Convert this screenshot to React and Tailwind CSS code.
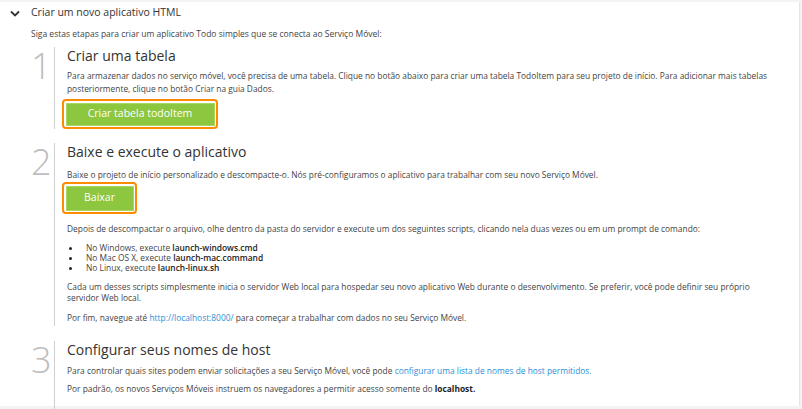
import React from "react";

function Step({ n, children, lineClass }) {
  return (
    <div className="flex">
      <div className="w-[23px] shrink-0 pr-[5px] pt-[2px] text-right text-[36px] leading-[34px] font-light text-[#bdbdbd]">{n}</div>
      <div className={`border-l border-[#cfcfcf] pl-[12px] pr-[20px] flex-1 ${lineClass || ""}`}>{children}</div>
    </div>
  );
}

function GreenButton({ label, w, h }) {
  return (
    <div className={`inline-block -ml-[5px] rounded-[4px] border-2 border-[#ff8c00] p-[1.5px] ${w}`}>
      <div className={`${h} bg-[#8dc63f] border border-[#a8d763] flex items-center justify-center text-white text-[10.5px]`}>{label}</div>
    </div>
  );
}

const P = "text-[8.4px] leading-[13px]";
const TITLE = "text-[14px] leading-[18px] text-[#333]";

export default function App() {
  return (
    <div className="w-[802px] h-[409px] overflow-hidden bg-[#f3f3f3] pt-[2px] pr-[2px] pb-[3px] text-[#444]" style={{ fontFamily: '"Open Sans", "Noto Sans", sans-serif' }}>
      <div className="h-full bg-white border-r border-[#e6e6e6]">
        {/* Header */}
        <div className="flex items-center h-[22px] pl-[10px]">
          <svg width="10" height="7" viewBox="0 0 10 7" className="mr-[11px]">
            <path d="M1 1.5 L5 5.5 L9 1.5" fill="none" stroke="#333" strokeWidth="1.8" />
          </svg>
          <span className="text-[10.5px] text-[#333]">Criar um novo aplicativo HTML</span>
        </div>
        <div className="pl-[31px] pt-[3px] text-[8.5px] leading-[13px]">
          Siga estas etapas para criar um aplicativo Todo simples que se conecta ao Serviço Móvel:
        </div>

        <div className="pl-[31px] mt-[7px]">
          {/* Step 1 */}
          <Step n="1">
            <div className={TITLE}>Criar uma tabela</div>
            <div className={`${P} mt-[4px]`}>
              Para armazenar dados no serviço móvel, você precisa de uma tabela. Clique no botão abaixo para criar uma tabela TodoItem para seu projeto de início. Para adicionar mais tabelas posteriormente, clique no botão Criar na guia Dados.
            </div>
            <div className="mt-[4px]">
              <GreenButton label="Criar tabela todoItem" w="w-[156px]" h="h-[23px]" />
            </div>
          </Step>

          {/* Step 2 */}
          <div className="mt-[14px]">
            <Step n="2" lineClass="pb-[2px]">
              <div className={TITLE}>Baixe e execute o aplicativo</div>
              <div className={`${P} mt-[7px]`}>
                Baixe o projeto de início personalizado e descompacte-o. Nós pré-configuramos o aplicativo para trabalhar com seu novo Serviço Móvel.
              </div>
              <div className="mt-[1px]">
                <GreenButton label="Baixar" w="w-[75px]" h="h-[25px]" />
              </div>
              <div className={`${P} mt-[8px]`}>
                Depois de descompactar o arquivo, olhe dentro da pasta do servidor e execute um dos seguintes scripts, clicando nela duas vezes ou em um prompt de comando:
              </div>
              <ul className="mt-[8px] text-[8.4px] leading-[10px]">
                {[
                  ["No Windows, execute ", "launch-windows.cmd"],
                  ["No Mac OS X, execute ", "launch-mac.command"],
                  ["No Linux, execute ", "launch-linux.sh"],
                ].map(([a, b]) => (
                  <li key={b} className="flex items-center">
                    <span className="w-[3px] h-[3px] rounded-full bg-[#222] ml-[2px] mr-[14px]" />
                    <span>{a}<b className="font-semibold text-[#222]">{b}</b></span>
                  </li>
                ))}
              </ul>
              <div className="text-[8.4px] leading-[10.5px] mt-[9px]">
                Cada um desses scripts simplesmente inicia o servidor Web local para hospedar seu novo aplicativo Web durante o desenvolvimento. Se preferir, você pode definir seu próprio servidor Web local.
              </div>
              <div className={`${P} mt-[8px]`}>
                Por fim, navegue até <span className="text-[#2e8fd6]">http://localhost:8000/</span> para começar a trabalhar com dados no seu Serviço Móvel.
              </div>
            </Step>
          </div>

          {/* Step 3 */}
          <div className="mt-[15px]">
            <Step n="3" lineClass="pb-[20px]">
              <div className={TITLE}>Configurar seus nomes de host</div>
              <div className={`${P} mt-[5px]`}>
                Para controlar quais sites podem enviar solicitações a seu Serviço Móvel, você pode <span className="text-[#2e8fd6]">configurar uma lista de nomes de host permitidos.</span>
              </div>
              <div className={`${P} mt-[5px]`}>
                Por padrão, os novos Serviços Móveis instruem os navegadores a permitir acesso somente do <b className="font-bold text-[#222]">localhost.</b>
              </div>
            </Step>
          </div>
        </div>
      </div>
    </div>
  );
}
